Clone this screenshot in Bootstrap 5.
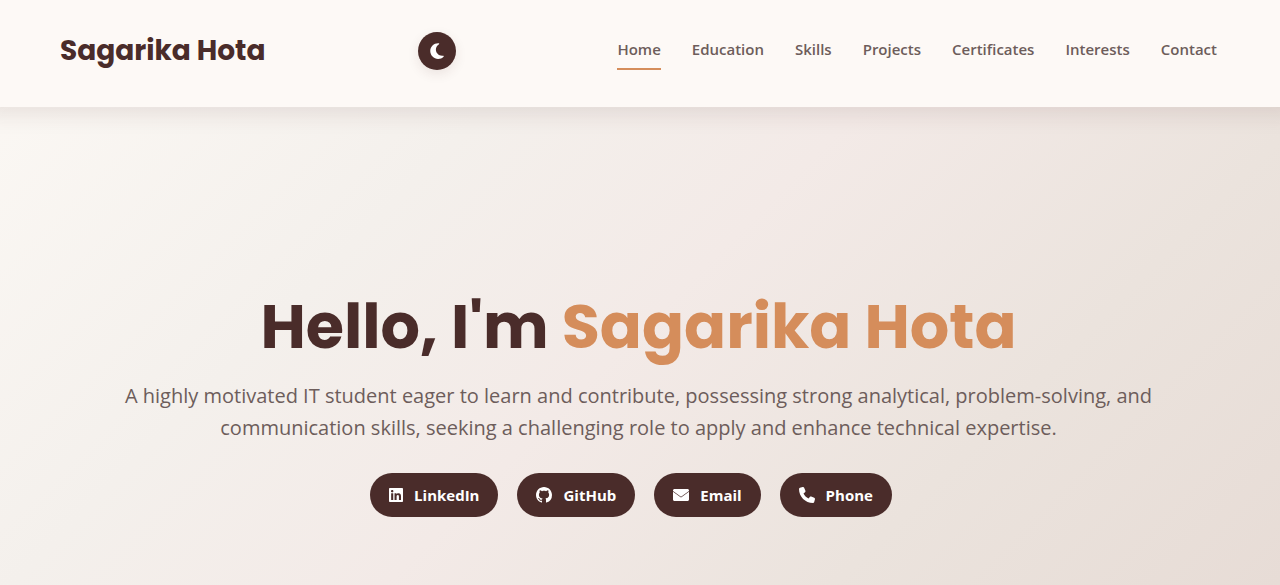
<!DOCTYPE html>
<html lang="en">
<head>
<meta charset="utf-8">
<meta name="viewport" content="width=device-width, initial-scale=1">
<title>Sagarika Hota</title>
<link href="https://cdn.jsdelivr.net/npm/bootstrap@5.3.0/dist/css/bootstrap.min.css" rel="stylesheet">
<style>
:root { --brown: #4a2c2a; --accent: #d58d5b; --muted: #6d5d5b; --cream: #fdf9f6; }
body { font-family: "Open Sans", "Noto Sans", sans-serif; color: var(--muted); background: linear-gradient(135deg, #fcf9f5 0%, #f4f0ec 32%, #f3eae7 52%, #ebe3dd 76%, #e7dcd6 100%); }
.site-header { background: var(--cream); min-height: 107px; padding: 0 63px 6px 60px; box-shadow: 0 -8px 20px 16px rgba(74, 44, 42, .1); }
.site-header .navbar-brand { font-family: Poppins, Inter, sans-serif; font-weight: 700; font-size: 28px; line-height: 40px; color: var(--brown); }
.theme-toggle { width: 38px; height: 38px; background: var(--brown); color: #fff; box-shadow: 0 4px 12px rgba(74, 44, 42, .1); }
.site-nav { gap: 31px; padding-left: 8px; }
.site-nav .nav-link { font-size: 15px; font-weight: 600; line-height: 24px; color: var(--muted); padding: 6px 0 7px; border-bottom: 2px solid transparent; transition: none; }
.site-nav .nav-link.active { border-color: var(--accent); color: var(--muted); }
.hero { padding: 184px 63px 68px 60px; }
.hero h1 { font-family: Poppins, Inter, sans-serif; font-weight: 700; font-size: 62px; line-height: 72px; color: var(--brown); margin-bottom: 17px; }
.hero h1 span { color: var(--accent); }
.hero p { font-size: 20px; line-height: 32px; max-width: 1060px; margin-bottom: 29px; }
.contact-links { gap: 19px; margin-right: 15px; }
.contact-links .btn { background: var(--brown); color: #fff; font-size: 15px; font-weight: 700; line-height: 24px; padding: 9px 18px; gap: 11px; }
</style>
</head>
<body class="min-vh-100">
<header class="site-header d-flex align-items-center justify-content-between">
  <a class="navbar-brand m-0" href="#home">Sagarika Hota</a>
  <button type="button" class="theme-toggle btn rounded-circle p-0 d-flex align-items-center justify-content-center" aria-label="Switch theme">
    <svg width="16" height="18" viewBox="0 0 384 512" fill="currentColor" aria-hidden="true"><path d="M223.500 32C100 32 0 132.300 0 256S100 480 223.500 480c60.600 0 115.500-24.200 155.800-63.400c5-4.900 6.300-12.500 3.100-18.700s-10.100-9.700-17-8.500c-9.800 1.700-19.800 2.600-30.100 2.600c-96.900 0-175.500-78.800-175.500-176c0-65.800 36-123.100 89.300-153.300c6.100-3.500 9.200-10.500 7.700-17.300s-7.300-11.900-14.300-12.500c-6.300-.5-12.600-.8-19-.8z"/></svg>
  </button>
  <nav aria-label="Main">
    <ul class="site-nav nav">
      <li class="nav-item"><a class="nav-link active" aria-current="page" href="#home">Home</a></li>
      <li class="nav-item"><a class="nav-link" href="#education">Education</a></li>
      <li class="nav-item"><a class="nav-link" href="#skills">Skills</a></li>
      <li class="nav-item"><a class="nav-link" href="#projects">Projects</a></li>
      <li class="nav-item"><a class="nav-link" href="#certificates">Certificates</a></li>
      <li class="nav-item"><a class="nav-link" href="#interests">Interests</a></li>
      <li class="nav-item"><a class="nav-link" href="#contact">Contact</a></li>
    </ul>
  </nav>
</header>
<main class="hero text-center" id="home">
  <h1>Hello, I'm <span>Sagarika Hota</span></h1>
  <p class="mx-auto">A highly motivated IT student eager to learn and contribute, possessing strong analytical, problem-solving, and communication skills, seeking a challenging role to apply and enhance technical expertise.</p>
  <div class="contact-links d-flex flex-wrap justify-content-center">
    <a class="btn rounded-pill d-flex align-items-center" href="#linkedin">
      <svg width="14" height="16" viewBox="0 0 448 512" fill="currentColor" aria-hidden="true"><path d="M416 32H31.900C14.300 32 0 46.500 0 64.300v383.400C0 465.500 14.300 480 31.900 480H416c17.600 0 32-14.500 32-32.300V64.300c0-17.800-14.400-32.300-32-32.300zM135.400 416H69V202.200h66.500V416zm-33.200-243c-21.300 0-38.500-17.300-38.500-38.500S80.900 96 102.200 96c21.200 0 38.500 17.300 38.500 38.500 0 21.300-17.200 38.500-38.500 38.500zm282.100 243h-66.400V312c0-24.800-.5-56.700-34.500-56.700-34.600 0-39.900 27-39.900 54.900V416h-66.400V202.200h63.700v29.200h.9c8.900-16.800 30.600-34.500 62.900-34.500 67.200 0 79.700 44.300 79.700 101.900V416z"/></svg>LinkedIn</a>
    <a class="btn rounded-pill d-flex align-items-center" href="#github">
      <svg width="16" height="16" viewBox="0 0 16 16" fill="currentColor" aria-hidden="true"><path d="M8 0C3.580 0 0 3.580 0 8c0 3.540 2.290 6.530 5.470 7.590.4.070.55-.17.55-.38 0-.19-.01-.82-.01-1.490-2.010.37-2.530-.49-2.690-.94-.09-.23-.48-.94-.82-1.130-.28-.15-.68-.52-.01-.53.63-.01 1.080.58 1.230.82.72 1.210 1.870.87 2.330.66.070-.52.28-.87.51-1.070-1.780-.2-3.640-.89-3.640-3.950 0-.87.31-1.590.82-2.150-.08-.2-.36-1.020.08-2.120 0 0 .67-.21 2.200.82.64-.18 1.320-.27 2-.27s1.360.09 2 .27c1.530-1.040 2.200-.82 2.200-.82.44 1.100.16 1.920.08 2.120.51.56.82 1.270.82 2.150 0 3.070-1.870 3.750-3.650 3.950.29.25.54.73.54 1.480 0 1.070-.01 1.930-.01 2.200 0 .21.15.46.55.38A8.010 8.010 0 0 0 16 8c0-4.420-3.580-8-8-8z"/></svg>GitHub</a>
    <a class="btn rounded-pill d-flex align-items-center" href="#email">
      <svg width="16" height="16" viewBox="0 0 512 512" fill="currentColor" aria-hidden="true"><path d="M48 64C21.500 64 0 85.500 0 112v16L256 310L512 128v-16c0-26.500-21.500-48-48-48H48zM0 152V400c0 26.500 21.500 48 48 48H464c26.500 0 48-21.500 48-48V152L256 334L0 152z"/></svg>Email</a>
    <a class="btn rounded-pill d-flex align-items-center" href="#phone">
      <svg width="16" height="16" viewBox="0 0 512 512" fill="currentColor" aria-hidden="true"><path d="M164.900 24.600c-7.700-18.600-28-28.500-47.400-23.200l-88 24C12.100 30.200 0 46 0 64C0 311.400 200.600 512 448 512c18 0 33.800-12.100 38.600-29.500l24-88c5.300-19.400-4.600-39.700-23.200-47.400l-96-40c-16.300-6.800-35.200-2.100-46.300 11.600L304.700 368C234.300 334.700 177.300 277.700 144 207.300L193.300 167c13.700-11.200 18.400-30 11.600-46.300l-40-96z"/></svg>Phone</a>
  </div>
</main>
<script src="https://cdn.jsdelivr.net/npm/bootstrap@5.3.0/dist/js/bootstrap.bundle.min.js"></script>
</body>
</html>
